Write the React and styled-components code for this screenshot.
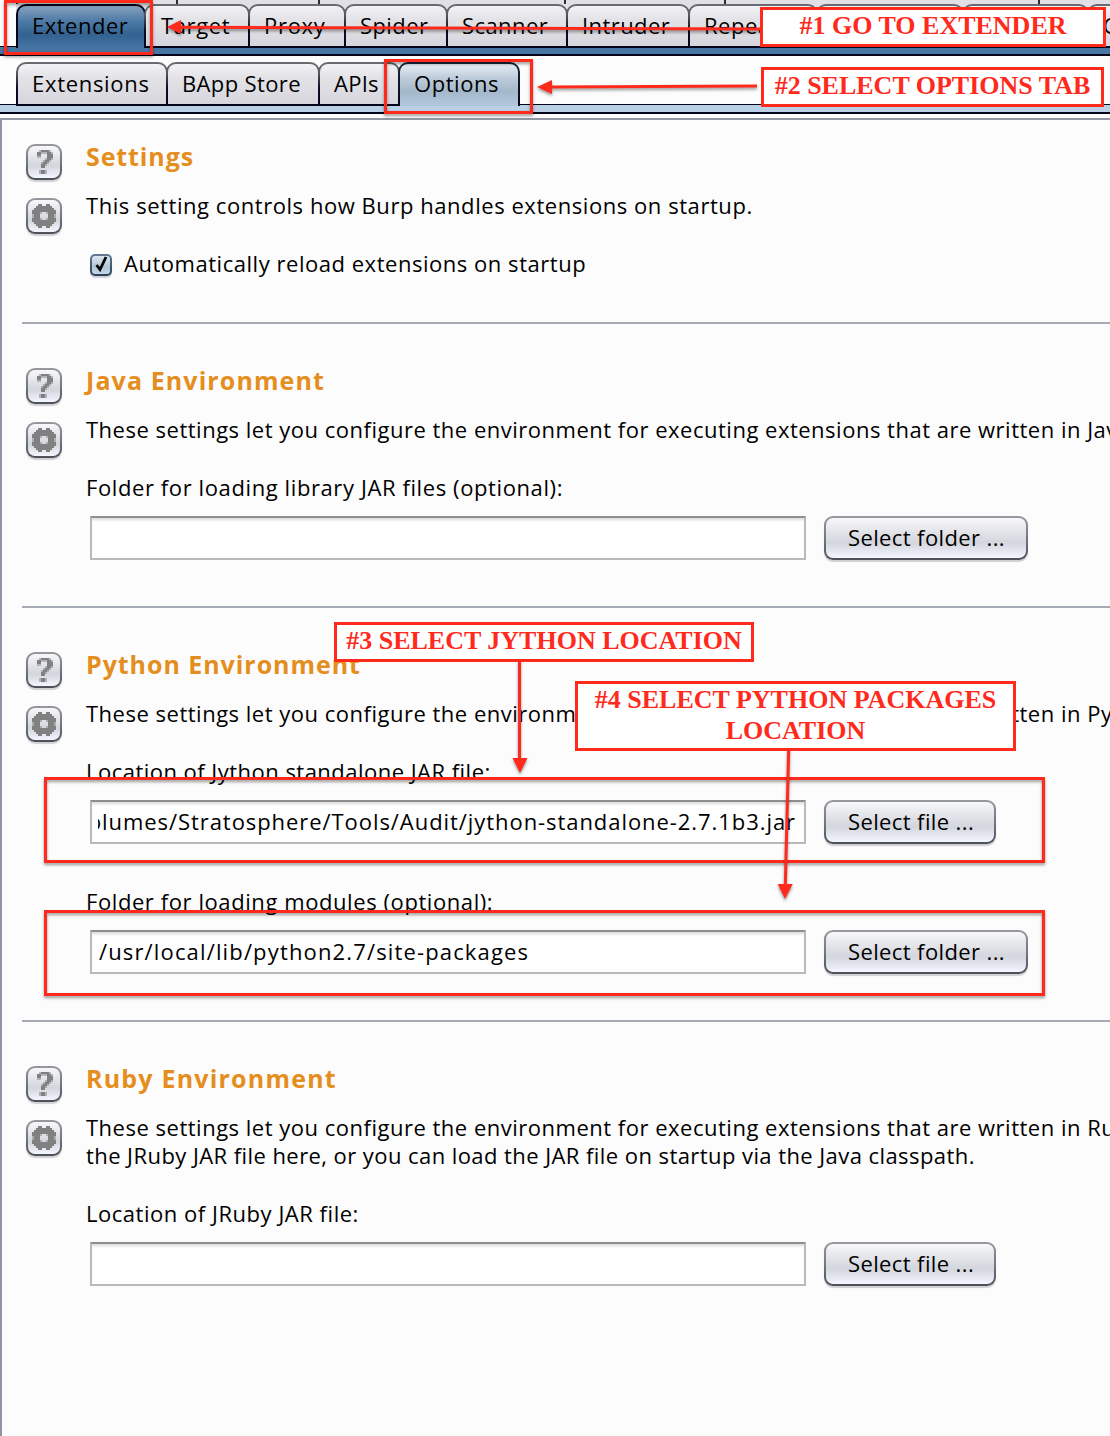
import React from "react";
import styled, { createGlobalStyle, css } from "styled-components";

const GlobalStyle = createGlobalStyle`
  *, *::before, *::after { box-sizing: border-box; }
  body { margin: 0; background: #fcfcfc; }
`;

const Window = styled.div`
  position: relative;
  width: 1110px;
  height: 1436px;
  overflow: hidden;
  display: flex;
  flex-direction: column;
  background: #fcfcfc;
  color: #000;
  font: 400 22px/28px "Open Sans", "Noto Sans", sans-serif;
  letter-spacing: 0.5px;
  white-space: nowrap;
`;

/* ---------- tabs ---------- */

const BackRow = styled.div`
  display: flex;
  flex: none;
  height: 4px;
  margin-left: 16px;
  background: #e0e0e5;
  border-left: 2px solid #2c2c3a;
`;

const BackTab = styled.div`
  flex: none;
  width: ${(p) => p.$width}px;
  border-right: 2px solid #2c2c3a;
`;

const TabRow = styled.div`
  position: relative;
  z-index: 1;
  display: flex;
  flex: none;
  height: 44px;
  margin-left: 16px;
  margin-top: ${(p) => (p.$spaced ? 6 : 0)}px;
  background: ${(p) => (p.$spaced ? "transparent" : "#e0e0e5")};
`;

const tabLooks = {
  plain: css`
    border-bottom-width: 2px;
    background:
      linear-gradient(#f3f3f6, #e2e2e7 35%, #dcdce2 70%, #d5d5dc) padding-box,
      linear-gradient(#6b6d74, #55565f 25%, #0c0c22 60%, #05051a) border-box;
  `,
  deep: css`
    background:
      linear-gradient(#86a1bd, #4f7ba7 35%, #336290 68%, #4775a4) padding-box,
      linear-gradient(#05051a, #05051a) border-box;
  `,
  light: css`
    background:
      linear-gradient(#e6edf3, #bccbd9 35%, #a4b8ca 65%, #b2c8de) padding-box,
      linear-gradient(#14273c, #0f1a30 40%, #05051a) border-box;
  `,
};

const Tab = styled.div`
  flex: none;
  width: ${(p) => p.$width}px;
  padding: 5px 0 0 ${(p) => p.$pad || 14}px;
  border: 2px solid transparent;
  border-bottom-width: 0;
  border-radius: 10px 10px 0 0;
  letter-spacing: ${(p) => p.$track || 0.5}px;
  overflow: hidden;
  ${(p) => tabLooks[p.$look || "plain"]}

  & + & { margin-left: -2px; }
`;

const Strip = styled.div`
  flex: none;
  height: 10px;
  margin-top: -2px;
  border-top: 1px solid #05051a;
  border-bottom: 2px solid #05051a;
  background: ${(p) => (p.$deep ? "#4876a4" : "#bad0e4")};
`;

/* ---------- option panel ---------- */

const Panel = styled.main`
  flex: 1;
  margin-top: 4px;
  border-top: 2px solid #9297a3;
  border-left: 2px solid #9094a4;
  overflow: hidden;
`;

const Section = styled.section`
  display: flex;
  height: ${(p) => p.$height}px;
  margin-left: 20px;
  padding: ${(p) => (p.$first ? 24 : 44)}px 0 0 4px;
  border-bottom: ${(p) => (p.$last ? 0 : 2)}px solid #a6aab5;
`;

const IconColumn = styled.div`
  display: flex;
  flex: none;
  flex-direction: column;
  gap: 18px;
  width: 60px;
`;

const raised = css`
  border: 2px solid transparent;
  border-radius: 9px;
  background:
    linear-gradient(#f8f8fa, #dfe1e6 40%, #d3d6dd 62%, #f3f5ff) padding-box,
    linear-gradient(#969a9f, #6c7078 60%, #4c4e58) border-box;
  box-shadow: 0 2px 1px #d0d0d2;
`;

const IconButton = styled.div`
  display: grid;
  place-items: center;
  width: 36px;
  height: 36px;
  ${raised}
`;

const Body = styled.div`
  flex: none;
  width: 1100px;
`;

const Heading = styled.h2`
  margin: -2px 0 21px;
  color: #e58e20;
  font-size: 25px;
  font-weight: 700;
  line-height: 28px;
  letter-spacing: ${(p) => p.$track}px;
`;

const Line = styled.div`
  letter-spacing: ${(p) => p.$track}px;
`;

const Label = styled.div`
  margin-top: ${(p) => (p.$next ? 43 : 30)}px;
  letter-spacing: ${(p) => p.$track}px;
`;

const FieldRow = styled.div`
  display: flex;
  gap: 18px;
  margin: 15px 0 0 4px;
`;

const Field = styled.div`
  display: flex;
  align-items: center;
  width: 716px;
  height: 44px;
  padding: 0 8px 2px 6px;
  border: 2px solid #b9b9b9;
  border-top-color: #8e8e8e;
  background: linear-gradient(#dcdcdc, #ffffff 4px);
`;

const FieldText = styled.div`
  display: flex;
  flex: 1;
  min-width: 0;
  overflow: hidden;
  justify-content: ${(p) => (p.$scrolled ? "flex-end" : "flex-start")};
  padding-left: ${(p) => (p.$scrolled ? 0 : 1)}px;
  letter-spacing: ${(p) => p.$track}px;
`;

const Button = styled.div`
  display: flex;
  align-items: center;
  height: 44px;
  width: ${(p) => p.$width}px;
  padding: 0 0 2px 22px;
  letter-spacing: 0.38px;
  ${raised}
`;

const CheckRow = styled.div`
  display: flex;
  gap: 12px;
  margin: 30px 0 0 4px;
`;

const CheckBox = styled.div`
  display: grid;
  width: 22px;
  height: 22px;
  margin-top: 5px;
  border: 2px solid transparent;
  border-radius: 5px;
  background:
    linear-gradient(#dbe5ef, #b2c5d7 60%, #c3d7ea) padding-box,
    linear-gradient(#647b95, #2a3f56) border-box;
  box-shadow: 0 2px 1px #cfd2d6;
`;

/* ---------- annotations ---------- */

const Overlay = styled.div`
  position: absolute;
  inset: 0;
  z-index: 2;
`;

const placed = css`
  position: absolute;
  left: ${(p) => p.$x}px;
  top: ${(p) => p.$y}px;
  width: ${(p) => p.$w}px;
  height: ${(p) => p.$h}px;
  border: 3px solid #ff2a1c;
`;

const Highlight = styled.div`
  ${placed}
  filter: drop-shadow(0 2px 1.5px rgba(0, 0, 0, 0.4));
`;

const Callout = styled.div`
  ${placed}
  background: #fff;
  color: #ff2a1c;
  font: 700 26px/31px "Liberation Serif", "Times New Roman", serif;
  letter-spacing: 0;
  text-align: center;
`;

const Arrows = styled.svg`
  position: absolute;
  inset: 0;
  filter: drop-shadow(0 2px 1.5px rgba(0, 0, 0, 0.4));
`;

/* ---------- icons ---------- */

const QUESTION = [
  "..+####+.",
  ".##+++##+",
  ".##...###",
  ".++...###",
  ".....+##+",
  "....+##+.",
  "...+##+..",
  "...##+...",
  "...##....",
  ".........",
  "..+##+...",
  "..+##+...",
];

const GEAR = [
  "...##..##...",
  "..########..",
  ".##########.",
  "############",
  "####+..+####",
  "+###....###+",
  "+###....###+",
  "####+..+####",
  "############",
  ".##########.",
  "..########..",
  "...##..##...",
];

function PixelIcon({ rows }) {
  const cols = rows[0].length;
  return (
    <svg width={cols * 2} height={rows.length * 2} viewBox={`0 0 ${cols} ${rows.length}`} shapeRendering="crispEdges">
      {rows.flatMap((row, y) =>
        [...row].map((c, x) =>
          c === "." ? null : (
            <rect key={`${x}-${y}`} x={x} y={y} width="1" height="1" fill="#808080" opacity={c === "#" ? 1 : 0.5} />
          )
        )
      )}
    </svg>
  );
}

function SectionIcons() {
  return (
    <IconColumn>
      <IconButton><PixelIcon rows={QUESTION} /></IconButton>
      <IconButton><PixelIcon rows={GEAR} /></IconButton>
    </IconColumn>
  );
}

function PathRow({ value, track, scrolled, button }) {
  return (
    <FieldRow>
      <Field>
        <FieldText $track={track} $scrolled={scrolled}><span>{value}</span></FieldText>
      </Field>
      <Button $width={button === "folder" ? 204 : 172}>Select {button} ...</Button>
    </FieldRow>
  );
}

const intro = "These settings let you configure the environment for executing extensions that are written in ";

export default function App() {
  return (
    <Window>
      <GlobalStyle />
      <BackRow>
        <BackTab $width={160} />
        <BackTab $width={142} />
        <BackTab $width={246} />
        <BackTab $width={160} />
        <BackTab $width={314} />
      </BackRow>
      <TabRow>
        <Tab $look="deep" $width={130}>Extender</Tab>
        <Tab $width={106} $pad={15} $track={0.6}>Target</Tab>
        <Tab $width={98} $track={0.7}>Proxy</Tab>
        <Tab $width={104} $track={0.42}>Spider</Tab>
        <Tab $width={122} $track={0.42}>Scanner</Tab>
        <Tab $width={124} $track={0.42}>Intruder</Tab>
        <Tab $width={130}>Repeater</Tab>
        <Tab $width={148} />
        <Tab $width={127} />
        <Tab $width={140}>Comparer</Tab>
      </TabRow>
      <Strip $deep />
      <TabRow $spaced>
        <Tab $width={152} $track={0.7}>Extensions</Tab>
        <Tab $width={154} $track={0.36}>BApp Store</Tab>
        <Tab $width={82} $track={0.25}>APIs</Tab>
        <Tab $look="light" $width={122} $track={0.55}>Options</Tab>
      </TabRow>
      <Strip />

      <Panel>
        <Section $height={204} $first>
          <SectionIcons />
          <Body>
            <Heading $track={0.9}>Settings</Heading>
            <Line $track={0.555}>This setting controls how Burp handles extensions on startup.</Line>
            <CheckRow>
              <CheckBox>
                <svg width="18" height="18" viewBox="0 0 18 18">
                  <path d="M4.5 9 L8 13.5 L14 1" fill="none" stroke="#050505" strokeWidth="2.8" />
                </svg>
              </CheckBox>
              <Line $track={0.53}>Automatically reload extensions on startup</Line>
            </CheckRow>
          </Body>
        </Section>

        <Section $height={284}>
          <SectionIcons />
          <Body>
            <Heading $track={1.1}>Java Environment</Heading>
            <Line $track={0.504}>{intro}Java</Line>
            <Label $track={0.6}>Folder for loading library JAR files (optional):</Label>
            <PathRow button="folder" />
          </Body>
        </Section>

        <Section $height={414}>
          <SectionIcons />
          <Body>
            <Heading $track={0.95}>Python Environment</Heading>
            <Line $track={0.504}>{intro}Python</Line>
            <Label $track={0.475}>Location of Jython standalone JAR file:</Label>
            <PathRow
              button="file"
              track={0.936}
              scrolled
              value="/Volumes/Stratosphere/Tools/Audit/jython-standalone-2.7.1b3.jar"
            />
            <Label $next $track={0.58}>Folder for loading modules (optional):</Label>
            <PathRow button="folder" track={1.147} value="/usr/local/lib/python2.7/site-packages" />
          </Body>
        </Section>

        <Section $height={414} $last>
          <SectionIcons />
          <Body>
            <Heading $track={1.2}>Ruby Environment</Heading>
            <Line $track={0.504}>{intro}Ruby</Line>
            <Line $track={0.43}>
              the JRuby JAR file here, or you can load the JAR file on startup via the Java classpath.
            </Line>
            <Label $track={0.53}>Location of JRuby JAR file:</Label>
            <PathRow button="file" />
          </Body>
        </Section>
      </Panel>

      <Overlay>
        <Highlight $x={4} $y={0} $w={149} $h={55} />
        <Highlight $x={384} $y={59} $w={149} $h={55} />
        <Highlight $x={44} $y={777} $w={1001} $h={86} />
        <Highlight $x={44} $y={910} $w={1001} $h={86} />
        <Arrows width="1110" height="1436" viewBox="0 0 1110 1436" stroke="#ff2a1c" strokeWidth="3" fill="#ff2a1c">
          <path d="M180 27.3 L762 29" />
          <path d="M167 27 L181 20 V34 Z" stroke="none" />
          <path d="M551 87 L757 86" />
          <path d="M537 87 L552 80 V94 Z" stroke="none" />
          <path d="M519.5 660 V760" />
          <path d="M520 773 L512.5 758 H527.5 Z" stroke="none" />
          <path d="M788.7 749 L785.3 886" />
          <path d="M785 899 L777.7 884 H792.7 Z" stroke="none" />
        </Arrows>
        <Callout $x={760} $y={7} $w={346} $h={40}>#1 GO TO EXTENDER</Callout>
        <Callout $x={761} $y={67} $w={343} $h={40}>#2 SELECT OPTIONS TAB</Callout>
        <Callout $x={334} $y={622} $w={420} $h={40}>#3 SELECT JYTHON LOCATION</Callout>
        <Callout $x={575} $y={681} $w={441} $h={70}>
          #4 SELECT PYTHON PACKAGES
          <br />
          LOCATION
        </Callout>
      </Overlay>
    </Window>
  );
}
